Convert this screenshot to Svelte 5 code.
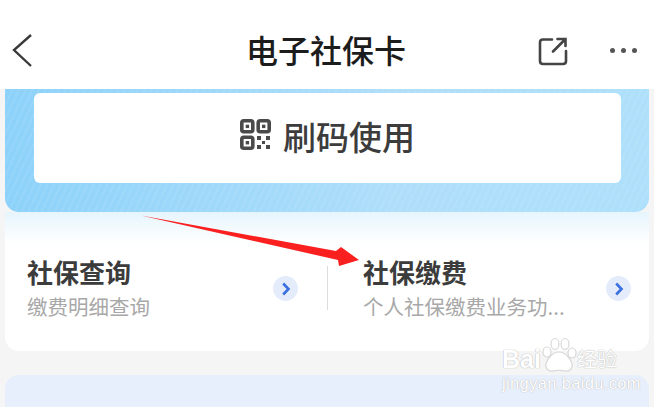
<script>
  const services = [
    { title: '社保查询', desc: '缴费明细查询' },
    { title: '社保缴费', desc: '个人社保缴费业务功...' }
  ];
</script>

<div class="page">
  <header class="nav">
    <svg class="back" width="24" height="36" viewBox="0 0 24 36">
      <path d="M20 2 L3 17 L20 33" fill="none" stroke="#3a3a3a" stroke-width="2.4" />
    </svg>
    <h1>电子社保卡</h1>
    <svg class="share" width="30" height="30" viewBox="0 0 30 30">
      <path d="M14 3.5 H5 Q2 3.5 2 6.5 V25 Q2 28 5 28 H25 Q28 28 28 25 V15" fill="none" stroke="#444" stroke-width="2.6" stroke-linecap="round" />
      <path d="M15 15.5 L27 3.5 M19.5 3 H27.5 V10" fill="none" stroke="#444" stroke-width="2.6" stroke-linecap="round" />
    </svg>
    <div class="dots"><i></i><i></i><i></i></div>
  </header>

  <section class="blue">
    <div class="scan">
      <svg width="31" height="31" viewBox="0 0 31 31">
        <g fill="none" stroke="#4a4a4a" stroke-width="3.6">
          <rect x="1.8" y="1.8" width="11" height="11" rx="2" />
          <rect x="18.2" y="1.8" width="11" height="11" rx="2" />
          <rect x="1.8" y="18.2" width="11" height="11" rx="2" />
        </g>
        <g fill="#4a4a4a">
          <rect x="5.7" y="5.7" width="3.4" height="3.4" />
          <rect x="22" y="5.7" width="3.4" height="3.4" />
          <rect x="5.7" y="22" width="3.4" height="3.4" />
          <rect x="17" y="17" width="4" height="4" />
          <rect x="26" y="17" width="4" height="4" />
          <rect x="22" y="22" width="3" height="3" />
          <rect x="26" y="26" width="4" height="4" />
          <rect x="17" y="26" width="4" height="4" />
        </g>
      </svg>
      <span>刷码使用</span>
    </div>
  </section>

  <section class="services">
    {#each services as item, i}
      <div class="service" class:second={i === 1}>
        <div class="text">
          <div class="title">{item.title}</div>
          <div class="desc">{item.desc}</div>
        </div>
        <div class="more">
          <svg width="10" height="14" viewBox="0 0 10 14">
            <path d="M2.2 1.5 L7.5 7 L2.2 12.5" fill="none" stroke="#3b6fe0" stroke-width="2.6" />
          </svg>
        </div>
      </div>
    {/each}
  </section>

  <section class="next"></section>

  <svg class="arrow" width="230" height="60" viewBox="0 0 230 60">
    <path d="M0 0.5 L195 36 L200 32 L218 45 L198 51 L197 45 Z" fill="#fa2020" />
  </svg>

  <div class="mark">
    <div class="logo">
      <span>Bai</span>
      <svg width="38" height="36" viewBox="0 0 38 36">
        <g fill="#fff" stroke="#d8d8d8" stroke-width="1.2">
          <ellipse cx="7" cy="15" rx="4" ry="5" />
          <ellipse cx="15" cy="7" rx="4" ry="5.5" />
          <ellipse cx="25" cy="7" rx="4" ry="5.5" />
          <ellipse cx="32" cy="16" rx="4" ry="5" />
          <path d="M19 15 C26 15 33 24 32 30 C30 36 24 34 19 33 C14 34 8 36 6 30 C5 24 12 15 19 15 Z" />
        </g>
      </svg>
      <span class="cn">经验</span>
    </div>
    <div class="url">jingyan.baidu.com</div>
  </div>
</div>

<style>
  :global(body) {
    margin: 0;
    background: #f5f5f5;
  }

  .page {
    position: relative;
    width: 654px;
    height: 407px;
    overflow: hidden;
    background: #f5f5f5;
    font-family: "Noto Sans CJK SC", "Noto Sans", sans-serif;
  }

  .nav {
    display: flex;
    align-items: center;
    justify-content: center;
    position: relative;
    height: 89px;
    background: #fff;
    padding-top: 8px;
    box-sizing: border-box;
  }

  .nav h1 {
    margin: 0 0 0 -2px;
    font-size: 32px;
    font-weight: 500;
    line-height: 40px;
    color: #1c1c1c;
  }

  .back {
    position: absolute;
    left: 11px;
    top: 33px;
  }

  .share {
    position: absolute;
    left: 538px;
    top: 36px;
  }

  .dots {
    position: absolute;
    left: 610px;
    top: 48px;
    display: flex;
    gap: 6px;
  }

  .dots i {
    width: 5px;
    height: 5px;
    border-radius: 50%;
    background: #555;
  }

  .blue {
    margin: 0 5px;
    height: 123px;
    padding: 4px 28px 0 29px;
    box-sizing: border-box;
    border-radius: 0 0 14px 14px;
    background:
      repeating-linear-gradient(115deg, rgba(255, 255, 255, 0.07) 0 2px, transparent 2px 6px),
      linear-gradient(90deg, #8dd2fa, #aedefa 60%, #aee0fb);
  }

  .scan {
    height: 90px;
    border-radius: 6px;
    background: #fff;
    display: flex;
    align-items: center;
    justify-content: center;
    gap: 12px;
    padding-bottom: 4px;
    box-sizing: border-box;
  }

  .scan span {
    font-size: 33px;
    line-height: 40px;
    font-weight: 500;
    color: #3c3c3c;
  }

  .scan svg {
    margin-top: -4px;
  }

  .services {
    display: flex;
    margin: 0 5px;
    height: 139px;
    border-radius: 0 0 14px 14px;
    background: linear-gradient(180deg, #e6f5fd, #fff 32px);
  }

  .service {
    flex: 1;
    display: flex;
    align-items: center;
    justify-content: space-between;
    box-sizing: border-box;
    padding: 29px 0 0 22px;
    height: 122px;
    min-width: 0;
  }

  .service:first-child {
    flex: 0 0 322px;
    padding-right: 29px;
  }

  .service.second {
    padding: 29px 18px 0 36px;
    position: relative;
  }

  .service.second::before {
    content: "";
    position: absolute;
    left: 0;
    top: 54px;
    width: 1px;
    height: 44px;
    background: #dcdcdc;
  }

  .title {
    font-size: 26px;
    font-weight: 700;
    line-height: 32px;
    color: #3c3c3c;
  }

  .desc {
    margin-top: 5px;
    font-size: 20.5px;
    line-height: 26px;
    color: #a8a8a8;
  }

  .more {
    width: 25px;
    height: 25px;
    border-radius: 50%;
    background: #e4ecfb;
    display: flex;
    align-items: center;
    justify-content: center;
    margin-top: 2px;
  }

  .next {
    margin: 24px 5px 0;
    height: 40px;
    border-radius: 14px 14px 0 0;
    background: #e8effc;
  }

  .arrow {
    position: absolute;
    left: 141px;
    top: 215px;
  }

  .mark {
    position: absolute;
    left: 502px;
    top: 337px;
    width: 152px;
    color: #fff;
    text-shadow: 0 0 1px #bbb, 0 0 1px #bbb;
  }

  .logo {
    display: flex;
    align-items: flex-end;
    font-family: "Liberation Sans", sans-serif;
    font-size: 25px;
    font-weight: 700;
    line-height: 28px;
  }

  .logo svg {
    margin: 0 -1px 0 -1px;
  }

  .logo .cn {
    font-family: "Noto Sans CJK SC", sans-serif;
    font-size: 20px;
    font-weight: 400;
  }

  .url {
    margin-top: 1px;
    font-family: "Liberation Sans", sans-serif;
    font-size: 16.5px;
    line-height: 18px;
    letter-spacing: 0.35px;
    white-space: nowrap;
  }
</style>
